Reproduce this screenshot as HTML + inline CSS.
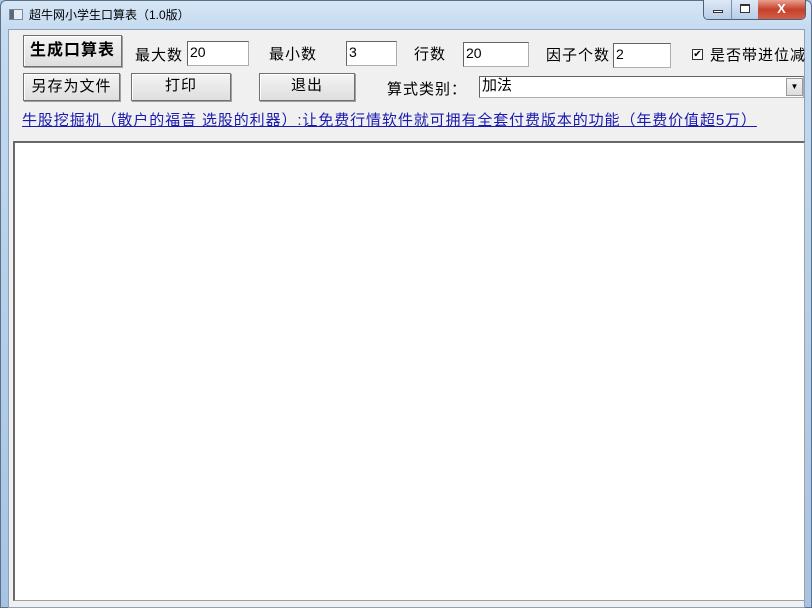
<!DOCTYPE html>
<html><head><meta charset="utf-8"><style>
*{margin:0;padding:0;box-sizing:border-box}
body{width:812px;height:608px;overflow:hidden;background:#a9c6e6;font-family:"Liberation Sans","Noto Sans CJK SC",sans-serif;position:relative}
.a{position:absolute}
.frame{left:0;top:0;width:812px;height:608px;background:linear-gradient(180deg,#d6e6f5 0,#c4daf0 30px,#a6c3e3 100%);border:1px solid #5a7188;border-radius:6px 6px 0 0}
.client{left:8px;top:29px;width:797px;height:579px;background:#f0f0f0;border:1px solid #8da2b8}
.btn{position:absolute;background:linear-gradient(#f4f4f4,#dedede);border:1px solid #707070;box-shadow:inset 1px 1px 0 #fff,1px 1px 0 #a0a0a0;font-size:15px;text-align:center;color:#000;letter-spacing:1px}
.lbl{position:absolute;font-size:15px;color:#000;letter-spacing:1px}
.inp{position:absolute;background:#fff;border:1px solid #abadb3;border-top-color:#646464;border-left-color:#646464;font-size:14px;padding-left:2px;line-height:20px}
</style></head><body>
<div class="a frame"></div>
<div class="a" style="left:9px;top:9px;width:14px;height:11px;background:#e8eef4;border:1px solid #7a8a9a"><div style="width:4px;height:9px;background:#5a6a7a"></div></div>
<div class="a" style="left:29px;top:6px;font-size:12px;color:#000">超牛网小学生口算表（1.0版）</div>
<div class="a" style="left:703px;top:0;width:103px;height:20px;border:1px solid #50607a;border-top:none;border-radius:0 0 5px 5px;overflow:hidden;display:flex">
 <div style="width:28px;background:linear-gradient(#dde9f6,#b8cde6);border-right:1px solid #7d8fa6;position:relative"><div class="a" style="left:9px;top:10px;width:10px;height:3px;border:1px solid #333;background:#fff"></div></div>
 <div style="width:26px;background:linear-gradient(#dde9f6,#b8cde6);position:relative"><div class="a" style="left:8px;top:4px;width:10px;height:9px;border:1px solid #333;border-top-width:2px;background:#fff"></div></div>
 <div style="flex:1;background:linear-gradient(#e8a090,#c7402a 50%,#d2604a);color:#fff;font-weight:bold;font-size:13px;text-align:center;line-height:18px">X</div>
</div>
<div class="a client"></div>
<div class="btn" style="left:23px;top:35px;width:99px;height:32px;font-weight:bold;font-size:16px;line-height:30px">生成口算表</div>
<div class="lbl" style="left:135px;top:44px">最大数</div>
<div class="inp" style="left:187px;top:41px;width:62px;height:25px">20</div>
<div class="lbl" style="left:269px;top:43px">最小数</div>
<div class="inp" style="left:346px;top:41px;width:51px;height:25px">3</div>
<div class="lbl" style="left:414px;top:43px">行数</div>
<div class="inp" style="left:463px;top:42px;width:66px;height:25px">20</div>
<div class="lbl" style="left:546px;top:44px">因子个数</div>
<div class="inp" style="left:613px;top:43px;width:58px;height:25px">2</div>
<div class="a" style="left:692px;top:49px;width:11px;height:11px;border:1px solid #333;background:#fff;font-size:10px;line-height:9px;text-align:center">✔</div>
<div class="lbl" style="left:710px;top:44px;white-space:nowrap">是否带进位减</div>
<div class="btn" style="left:23px;top:73px;width:97px;height:28px;line-height:26px">另存为文件</div>
<div class="btn" style="left:131px;top:73px;width:100px;height:28px;line-height:24px">打印</div>
<div class="btn" style="left:259px;top:73px;width:96px;height:28px;line-height:24px">退出</div>
<div class="lbl" style="left:387px;top:78px">算式类别：</div>
<div class="inp" style="left:479px;top:76px;width:325px;height:22px;line-height:18px;font-size:15px">加法</div>
<div class="a" style="left:786px;top:78px;width:17px;height:18px;background:linear-gradient(#f4f4f4,#dcdcdc);border:1px solid #999;font-size:8px;text-align:center;line-height:16px">▼</div>
<div class="a" style="left:22px;top:109px;font-size:15px;color:#1a1ab0;text-decoration:underline;white-space:nowrap;letter-spacing:0.9px">牛股挖掘机（散户的福音 选股的利器）:让免费行情软件就可拥有全套付费版本的功能（年费价值超5万）</div>
<div class="a" style="left:13px;top:141px;width:792px;height:460px;background:#fff;border:1px solid #a0a0a0;border-top:2px solid #696969;border-left:2px solid #696969"></div>
</body></html>
